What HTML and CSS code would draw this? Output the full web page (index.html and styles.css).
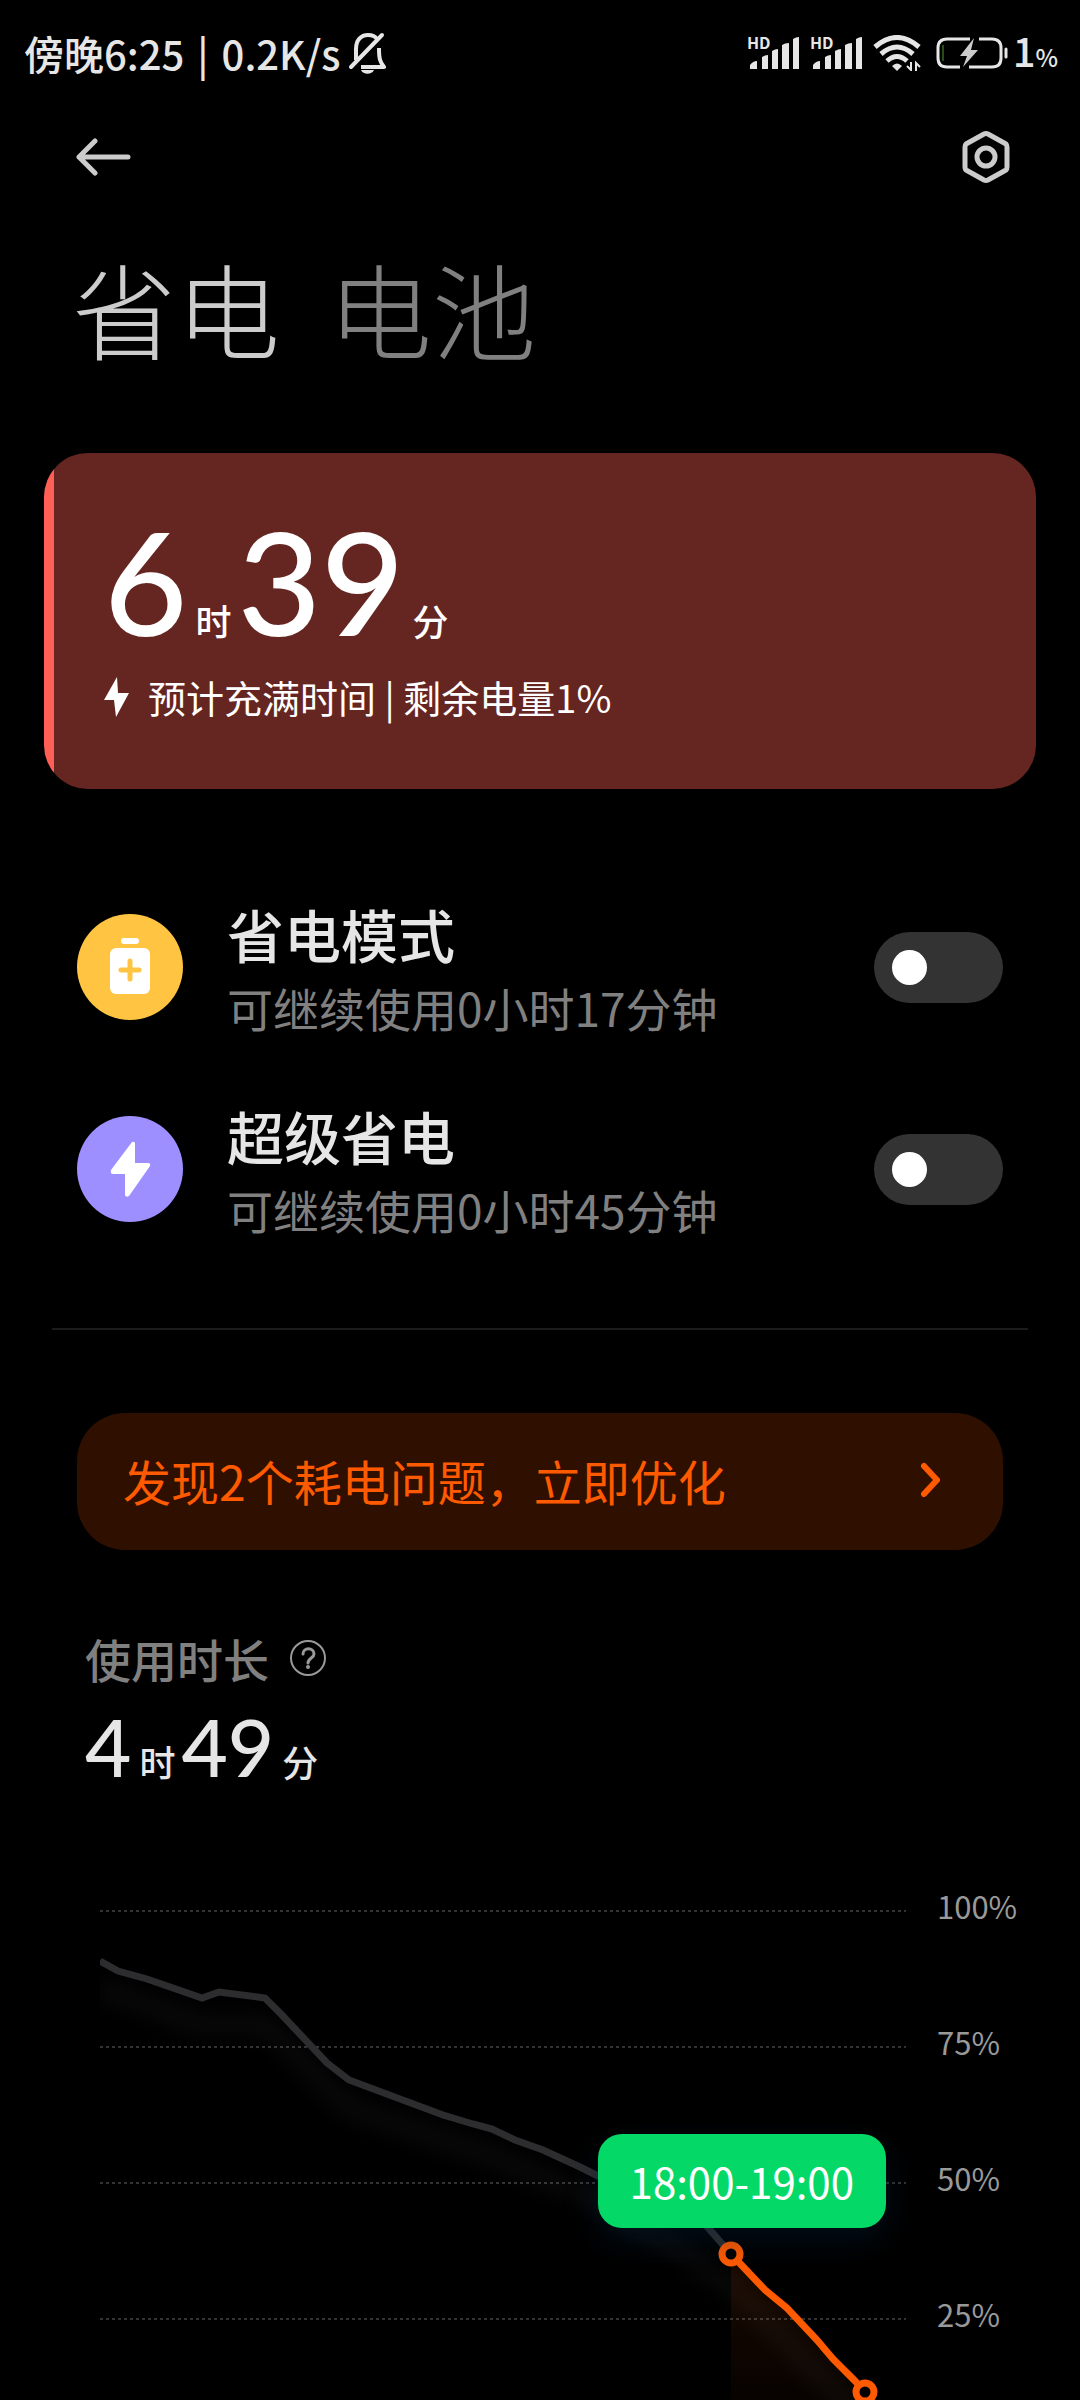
FILE: index.html
```html
<!DOCTYPE html>
<html lang="zh-CN">
  <head>
    <meta charset="UTF-8" />
    <meta name="viewport" content="width=device-width, initial-scale=1.0" />
    <title>省电与电池</title>
    <link rel="stylesheet" href="styles.css">
  </head>
  <body>
    <div class="status-bar">
      <span>傍晚6:25<span class="separator"> | </span>0.2K/s</span>
      <svg class="bell" width="38" height="42" viewBox="0 0 38 42" fill="none" stroke="currentColor" stroke-width="4">
        <path d="M8 28V17C8 8 13 3 20 3c4 0 7 1 9 4M31 16c0 11 1 14 5 19H13" stroke-linejoin="round" />
        <path d="M3 35L34 3" stroke-linecap="round" />
        <path d="M13 38h13c-2 5-11 5-13 0z" fill="currentColor" stroke="none" />
      </svg>
      <div class="status-icons">
        <svg class="signal" width="54" height="36" viewBox="0 0 54 36" fill="currentColor">
          <text x="0" y="14">HD</text>
          <path d="M3 34v-4q3-4 7-4v8zM15 34V22q3-2 6-2v14zM25 34V16q3-2 6-2v20zM35 34V10q3-2 7-2v26zM46 34V4q3-2 6-2v32z" />
        </svg>
        <svg class="signal" width="54" height="36" viewBox="0 0 54 36" fill="currentColor">
          <text x="0" y="14">HD</text>
          <path d="M3 34v-4q3-4 7-4v8zM15 34V22q3-2 6-2v14zM25 34V16q3-2 6-2v20zM35 34V10q3-2 7-2v26zM46 34V4q3-2 6-2v32z" />
        </svg>
        <svg class="wifi" width="48" height="36" viewBox="0 0 48 36" fill="none" stroke="currentColor" stroke-width="5">
          <path d="M2 12Q24-7 46 12M8 19q16-14 32 0M14 26q10-9 20 0" />
          <path d="M19 31q5-5 10 0l-5 5z" fill="currentColor" stroke="none" />
          <path d="M38 27v8l-4-4M43 36v-8l4 4" stroke-width="2" />
        </svg>
        <svg class="battery" width="72" height="32" viewBox="0 0 72 32" fill="none" stroke="currentColor" stroke-width="3">
          <path d="M34 2H11Q2 2 2 11v10q0 9 9 9h13M43 2h13q9 0 9 9v10q0 9-9 9H33" />
          <path d="M7 8v16" stroke="#4c9a2a" stroke-width="1" />
          <path d="M38 1L24 19h7l-4 11 15-17h-7z" fill="#ccc" stroke="none" />
          <path d="M70 12v8" stroke-linecap="round" />
        </svg>
        <span class="battery-level">1<small>%</small></span>
      </div>
    </div>

    <header class="top-bar">
      <button class="icon-button" aria-label="返回">
        <svg width="56" height="40" viewBox="0 0 56 40" fill="none" stroke="currentColor" stroke-width="5" stroke-linecap="round" stroke-linejoin="round">
          <path d="M19 4L3 20l16 16M3 20h49" />
        </svg>
      </button>
      <button class="icon-button" aria-label="设置">
        <svg width="48" height="54" viewBox="0 0 48 54" fill="none" stroke="currentColor" stroke-width="5" stroke-linejoin="round">
          <path d="M22 4q2-1 4 0l18 10q1 1 1 3v20q0 2-1 3L26 50q-2 1-4 0L4 40q-1-1-1-3V17q0-2 1-3z" />
          <circle cx="24" cy="27" r="9" />
        </svg>
      </button>
    </header>

    <nav class="tabs">
      <a href="#saver" class="tab active">省电</a>
      <a href="#battery" class="tab">电池</a>
    </nav>

    <main>
      <section class="charge-card">
        <p class="duration charge-time">6<small>时</small>39<small>分</small></p>
        <p class="charge-note">
          <svg width="26" height="40" viewBox="0 0 26 40" fill="currentColor">
            <path d="M13 0L0 23h10l2 17L25 16H14z" />
          </svg>
          预计充满时间 | 剩余电量1%
        </p>
      </section>

      <section class="modes" id="saver">
        <div class="mode">
          <svg class="mode-icon" width="106" height="106" viewBox="0 0 106 106">
            <circle cx="53" cy="53" r="53" fill="#ffc542" />
            <rect x="44" y="24" width="18" height="6" rx="3" fill="#fff" />
            <rect x="33" y="34" width="40" height="46" rx="6" fill="#fff" />
            <path d="M53 47v18M44 56h18" stroke="#ffc542" stroke-width="5" stroke-linecap="round" />
          </svg>
          <label class="mode-text" for="power-save">
            <span class="mode-name">省电模式</span>
            <span class="mode-hint">可继续使用0小时17分钟</span>
          </label>
          <input type="checkbox" class="switch" id="power-save" />
        </div>
        <div class="mode">
          <svg class="mode-icon" width="106" height="106" viewBox="0 0 106 106">
            <circle cx="53" cy="53" r="53" fill="#9d8fff" />
            <path d="M55 26L34 54q-1 4 2 4h12v21q1 3 4 1l21-30q1-3-2-3H58V27q-1-2-3-1z" fill="#fff" />
          </svg>
          <label class="mode-text" for="ultra-save">
            <span class="mode-name">超级省电</span>
            <span class="mode-hint">可继续使用0小时45分钟</span>
          </label>
          <input type="checkbox" class="switch" id="ultra-save" />
        </div>
      </section>

      <a href="#optimize" class="optimize">
        <span>发现2个耗电问题，立即优化</span>
        <svg width="24" height="36" viewBox="0 0 24 36" fill="none" stroke="currentColor" stroke-width="6" stroke-linecap="round" stroke-linejoin="round">
          <path d="M5 4l13 14L5 32" />
        </svg>
      </a>

      <section class="usage" id="battery">
        <h2>
          使用时长
          <button class="icon-button help" aria-label="说明">
            <svg width="38" height="38" viewBox="0 0 38 38" fill="none" stroke="currentColor" stroke-width="2">
              <circle cx="19" cy="19" r="17" />
              <path d="M14 15c0-7 11-7 11 0 0 4-6 4-6 9" stroke-width="3" stroke-linecap="round" />
              <circle cx="19" cy="28" r="2" fill="currentColor" stroke="none" />
            </svg>
          </button>
        </h2>
        <p class="duration usage-time">4<small>时</small>49<small>分</small></p>
      </section>

      <section class="chart">
        <div class="plot">
          <svg width="100%" viewBox="0 0 806 500">
            <defs>
              <linearGradient id="area" x1="0" y1="0" x2="0" y2="1">
                <stop offset="0" stop-color="#ff5a00" stop-opacity="0.1" />
                <stop offset="1" stop-color="#ff5a00" stop-opacity="0.03" />
              </linearGradient>
              <filter id="soft" x="-10%" y="-10%" width="120%" height="130%">
                <feGaussianBlur stdDeviation="9" />
              </filter>
            </defs>
            <path class="grid-line" d="M0 11h806M0 147h806M0 283h806M0 419h806" />
            <path class="area" d="M631 354l34 36 22 18 30 32 16 19 22 22 10 11v8H631z" fill="url(#area)" />
            <path class="glow" d="M0 88L102 125 165 125 249 208 392 256 490 297 631 384 765 522" filter="url(#soft)" />
            <path class="level" d="M0 61l18 10 29 8 55 19 17-6 46 6 16 16 46 49 22 17 94 35 30 9 19 5 23 11 28 10 37 17 20 10 103 45 28 32" />
            <path class="level current" d="M631 354l34 36 22 18 30 32 16 19 22 22 10 11" />
            <circle class="dot" cx="631" cy="354" r="9" />
            <circle class="dot" cx="765" cy="492" r="9" />
          </svg>
          <span class="tooltip">18:00-19:00</span>
        </div>
        <div class="scale">
          <span>100%</span>
          <span>75%</span>
          <span>50%</span>
          <span>25%</span>
        </div>
      </section>
    </main>
  </body>
</html>
```
FILE: styles.css
```css
:root {
  --text-color: #e6e6e6;
  --muted-color: #808080;
  --accent-color: #ff5a00;
}

* {
  box-sizing: border-box;
}

body {
  margin: 0;
  background-color: #000;
  color: var(--text-color);
  font-family: "Noto Sans CJK SC", "Noto Sans", sans-serif;
}

svg {
  display: block;
  flex-shrink: 0;
}

p,
h2 {
  margin: 0;
}

a {
  text-decoration: none;
}

.status-bar {
  display: flex;
  align-items: center;
  height: 106px;
  padding: 0 22px 0 24px;
  font-size: 40px;
  font-weight: 500;
  line-height: 56px;
  white-space: nowrap;
}

.separator {
  margin: 0 4px;
}

.bell {
  margin-left: 8px;
}

.status-icons {
  display: flex;
  align-items: center;
  gap: 9px;
  margin-left: auto;
}

.signal {
  overflow: visible;
}

.signal text {
  font-size: 16px;
  font-weight: 700;
}

.battery {
  margin-left: 6px;
}

.battery-level {
  margin-left: -4px;
}

.battery-level small {
  font-size: 24px;
}

.top-bar {
  display: flex;
  justify-content: space-between;
  align-items: center;
  height: 102px;
  padding: 0 70px 0 76px;
}

.icon-button {
  padding: 0;
  border: none;
  background: none;
  color: #ccc;
  cursor: pointer;
}

.tabs {
  display: flex;
  gap: 48px;
  padding: 30px 72px 0;
  font-size: 104px;
  font-weight: 300;
  line-height: 140px;
}

.tab {
  color: var(--muted-color);
}

.tab.active {
  color: #ccc;
}

.charge-card {
  height: 336px;
  margin: 75px 44px 0;
  padding: 48px 60px;
  border-radius: 44px;
  background: linear-gradient(to right, #ff5f57 10px, #652622 10px);
  color: #fff;
}

.duration {
  font-family: Lato, "Noto Sans CJK SC", sans-serif;
  font-weight: 500;
}

.duration small {
  font-size: 36px;
  line-height: 1;
  margin: 0 6px 0 8px;
}

.charge-time {
  font-size: 144px;
  line-height: 160px;
}

.charge-note {
  display: flex;
  align-items: center;
  gap: 18px;
  margin-top: 8px;
  font-size: 38px;
  line-height: 56px;
}

.modes {
  display: grid;
  gap: 58px;
  margin: 0 52px;
  padding: 106px 25px 87px;
  border-bottom: 2px solid #1a1c1a;
}

.mode {
  display: flex;
  align-items: center;
}

.mode-text {
  display: grid;
  flex: 1;
  gap: 4px;
  margin-left: 44px;
}

.mode-name {
  font-size: 57px;
  font-weight: 500;
  line-height: 76px;
}

.mode-hint {
  color: var(--muted-color);
  font-size: 46px;
  line-height: 64px;
}

.switch {
  appearance: none;
  width: 129px;
  height: 71px;
  margin: 0;
  padding: 18px;
  border-radius: 36px;
  background-color: #333;
  cursor: pointer;
}

.switch::before {
  content: "";
  display: block;
  width: 35px;
  height: 35px;
  border-radius: 50%;
  background-color: #fff;
}

.switch:checked {
  background-color: #0d84ff;
}

.switch:checked::before {
  margin-left: auto;
}

.optimize {
  display: flex;
  justify-content: space-between;
  align-items: center;
  height: 137px;
  margin: 83px 77px 0;
  padding: 0 60px 4px 46px;
  border-radius: 48px;
  background-color: #2f1000;
  color: var(--accent-color);
  font-size: 48px;
}

.usage {
  padding: 74px 85px 0;
}

.usage h2 {
  display: flex;
  align-items: center;
  gap: 20px;
  color: var(--muted-color);
  font-size: 46px;
  font-weight: 500;
  line-height: 68px;
}

.help {
  color: #999;
}

.usage-time {
  font-size: 80px;
  line-height: 108px;
}

.chart {
  display: flex;
  gap: 31px;
  padding: 100px 50px 0 100px;
}

.plot {
  position: relative;
  flex: 1;
}

.scale {
  display: flex;
  flex-direction: column;
  gap: 88px;
  width: 93px;
  margin-top: -18px;
  color: #999;
  font-size: 31px;
  line-height: 48px;
}

.grid-line {
  stroke: #333;
  stroke-width: 2;
  stroke-dasharray: 3 3;
}

.level {
  fill: none;
  stroke: #2d2d2f;
  stroke-width: 7;
}

.level.current {
  stroke: var(--accent-color);
}

.glow {
  fill: none;
  stroke: #fff;
  stroke-opacity: 0.03;
  stroke-width: 22;
}

.dot {
  fill: #000;
  stroke: var(--accent-color);
  stroke-width: 7;
}

.tooltip {
  position: absolute;
  top: 234px;
  right: 20px;
  padding: 0 32px;
  border-radius: 24px;
  background-color: #04d967;
  box-shadow: 0 12px 32px rgba(0, 40, 70, 0.35);
  color: #fff;
  font-size: 42px;
  line-height: 94px;
}
```
